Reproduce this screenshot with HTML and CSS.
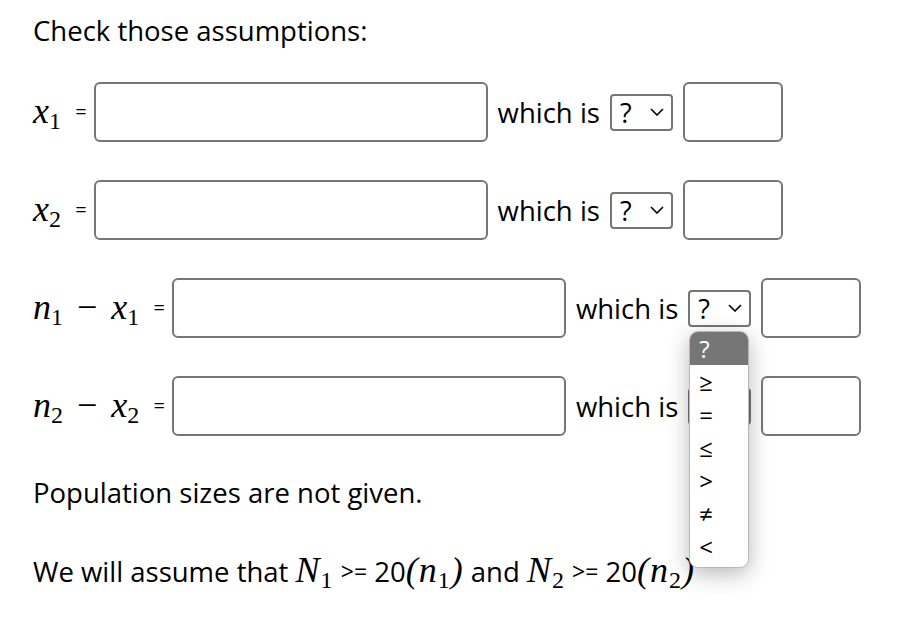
FILE: index.html
```
<!DOCTYPE html>
<html lang="en">
<head>
    <meta charset="UTF-8">
    <title>Check those assumptions</title>
    <link rel="stylesheet" href="styles.css">
</head>
<body>
    <div class="page">
        <p class="intro">Check those assumptions:</p>

        <div class="row">
            <span class="lbl"><span class="mv">x<sub>1</sub></span> <span class="eq">=</span></span>
            <input type="text" class="big-input">
            <span class="which">which is</span>
            <span class="sel">? <svg class="chev" viewBox="0 0 14 8"><polyline points="1,1 7,7 13,1"/></svg></span>
            <input type="text" class="small-input">
        </div>

        <div class="row">
            <span class="lbl"><span class="mv">x<sub>2</sub></span> <span class="eq">=</span></span>
            <input type="text" class="big-input">
            <span class="which">which is</span>
            <span class="sel">? <svg class="chev" viewBox="0 0 14 8"><polyline points="1,1 7,7 13,1"/></svg></span>
            <input type="text" class="small-input">
        </div>

        <div class="row">
            <span class="lbl"><span class="mv">n<sub>1</sub> <span class="minus">&minus;</span> x<sub>1</sub></span> <span class="eq">=</span></span>
            <input type="text" class="big-input">
            <span class="which">which is</span>
            <span class="sel-wrap">
                <span class="sel">? <svg class="chev" viewBox="0 0 14 8"><polyline points="1,1 7,7 13,1"/></svg></span>
                <ul class="dropdown">
                    <li class="active">?</li>
                    <li>&ge;</li>
                    <li>=</li>
                    <li>&le;</li>
                    <li>&gt;</li>
                    <li>&ne;</li>
                    <li>&lt;</li>
                </ul>
            </span>
            <input type="text" class="small-input">
        </div>

        <div class="row">
            <span class="lbl"><span class="mv">n<sub>2</sub> <span class="minus">&minus;</span> x<sub>2</sub></span> <span class="eq">=</span></span>
            <input type="text" class="big-input">
            <span class="which">which is</span>
            <span class="sel covered"><svg class="chev" viewBox="0 0 14 8"><polyline points="1,1 7,7 13,1"/></svg></span>
            <input type="text" class="small-input">
        </div>

        <p class="note">Population sizes are not given.</p>

        <p class="note">We will assume that <span class="mv">N<sub>1</sub></span> <span class="op">&gt;=</span> 20<span class="mv">(n<sub>1</sub>)</span> and <span class="mv">N<sub>2</sub></span> <span class="op">&gt;=</span> 20<span class="mv">(n<sub>2</sub>)</span></p>
    </div>
</body>
</html>
```

FILE: styles.css
```
body {
    margin: 0;
    background: #fff;
    color: #000;
    font-family: 'Open Sans', Lato, sans-serif;
    font-size: 27.5px;
}

.page {
    padding: 12px 33px 0;
}

.intro {
    margin: 0 0 32px;
    line-height: 38px;
}

.row {
    display: flex;
    align-items: center;
    gap: 10px;
    height: 60px;
    margin-bottom: 38px;
}

.lbl {
    white-space: nowrap;
    margin-right: -3px;
}

.mv {
    font-family: 'Liberation Serif', 'DejaVu Serif', serif;
    font-style: italic;
    font-size: 36px;
}

.note .mv {
    letter-spacing: 1px;
}

.mv sub {
    font-style: normal;
    font-size: 24px;
    vertical-align: -6px;
}

.minus {
    font-style: normal;
    margin: 0 5px;
}

.eq {
    font-size: 20px;
    vertical-align: 4px;
    margin-left: 7px;
}

.op {
    font-size: 23px;
    vertical-align: 2px;
}

input[type="text"] {
    box-sizing: border-box;
    height: 60px;
    border: 2px solid #767676;
    border-radius: 6px;
    background: #fff;
    margin: 0;
}

.big-input {
    width: 394px;
}

.small-input {
    width: 100px;
}

.which {
    white-space: nowrap;
}

.sel-wrap {
    position: relative;
    display: flex;
}

.sel {
    box-sizing: border-box;
    display: flex;
    align-items: center;
    justify-content: space-between;
    height: 37px;
    width: 63px;
    padding: 0 7px 0 8px;
    border: 2px solid #767676;
    border-radius: 4px;
    font-size: 27px;
}

.sel.covered {
    justify-content: flex-end;
}

.chev {
    width: 14px;
    height: 8px;
    fill: none;
    stroke: #000;
    stroke-width: 1.6;
}

.dropdown {
    position: absolute;
    top: 41px;
    left: 1px;
    width: 60px;
    box-sizing: border-box;
    margin: 0;
    padding: 0 0 4px;
    list-style: none;
    background: #fff;
    border: 1px solid #b8b8b8;
    border-radius: 9px;
    box-shadow: 0 6px 22px rgba(0, 0, 0, 0.28);
    overflow: hidden;
    font-size: 24px;
    z-index: 2;
}

.dropdown li {
    height: 33px;
    line-height: 33px;
    padding-left: 9px;
}

.dropdown li.active {
    background: #767676;
    color: #fff;
}

.note {
    margin: 38px 0 0;
}
```
